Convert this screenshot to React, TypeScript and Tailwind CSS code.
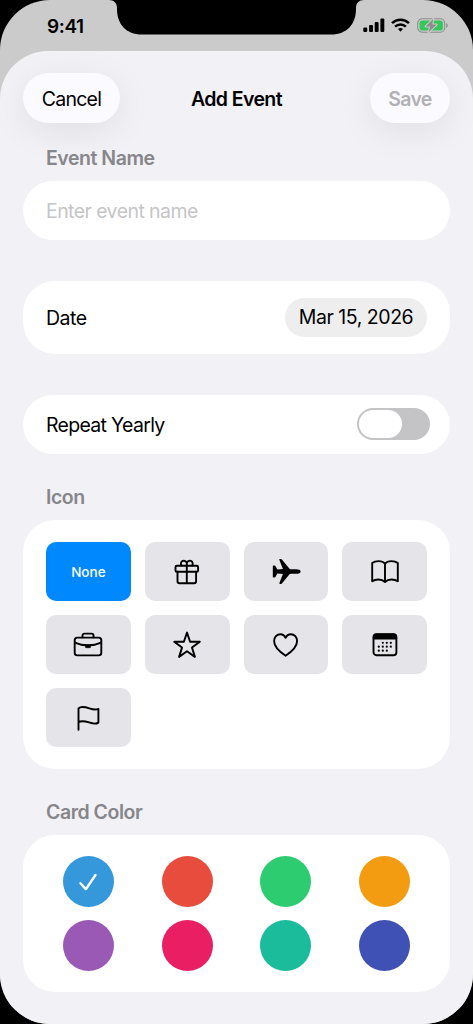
import { useState } from 'react';
import clsx from 'clsx';

const ICONS = ['none', 'gift', 'airplane', 'book', 'briefcase', 'star', 'heart', 'calendar', 'flag'];

const COLORS = [
  '#3498db',
  '#e74c3c',
  '#2ecc71',
  '#f39c12',
  '#9b59b6',
  '#e91e63',
  '#1abc9c',
  '#3f51b5',
];

const EventIcon = ({ name }: { name: string }) => {
  const props = {
    width: 32,
    height: 32,
    viewBox: '0 0 32 32',
    fill: 'none',
    stroke: 'currentColor',
    strokeWidth: 1.9,
    strokeLinecap: 'round' as const,
    strokeLinejoin: 'round' as const,
  };

  switch (name) {
    case 'gift':
      return (
        <svg {...props}>
          <rect x="4.5" y="9.8" width="22.6" height="6" rx="1.4" />
          <path d="M6.5 15.8v9.4a2 2 0 0 0 2 2h14.6a2 2 0 0 0 2-2v-9.4M15.8 9.8v17.4" />
          <path d="M15.8 9.8V7a3 3 0 1 0-5.4 2.4M15.8 9.800V7a3 3 0 1 1 5.400 2.400" />
        </svg>
      );
    case 'airplane':
      return (
        <svg {...props} fill="currentColor" stroke="none">
          <path
            transform="translate(1.1 -0.7)"
            d="M29.600 16.200c0-1.400-2.200-2.300-4.400-2.300h-5.400c-.7 0-1.100-.2-1.600-.8L11 4.400c-.3-.4-.7-.6-1.200-.6h-1c-.5 0-.7.4-.5.9l3.500 8.900-5.500.6-2-3.500a.9.9 0 0 0-.8-.4H2.300c-.4 0-.6.3-.6.6v10.600c0 .4.2.6.6.6h1.200c.4 0 .6-.1.8-.4l2-3.500 5.500.6-3.500 8.900c-.2.5 0 .9.5.9h1c.5 0 .9-.2 1.200-.6l7.200-8.700c.5-.6.9-.8 1.600-.8h5.400c2.200 0 4.400-.9 4.400-2.300z"
          />
        </svg>
      );
    case 'book':
      return (
        <svg {...props}>
          <path d="M16 7.800C14.700 6 12.300 5.100 9.600 5.100S4.500 5.900 3.200 7v18.300c1.600-1.100 3.800-1.800 6.200-1.800 2.700 0 5 .9 6.600 2.500 1.600-1.600 3.900-2.500 6.600-2.500 2.400 0 4.600.7 6.200 1.800V7c-1.300-1.100-3.700-1.900-6.400-1.900S17.300 6 16 7.800zV26" />
        </svg>
      );
    case 'briefcase':
      return (
        <svg {...props}>
          <rect x="2.700" y="8.600" width="26.600" height="17.800" rx="2.600" />
          <path d="M10.500 8.400V6.500a1.900 1.900 0 0 1 1.900-1.900h7.200a1.900 1.900 0 0 1 1.900 1.900v1.900" />
          <path d="M2.900 13.600c4 1.900 8.500 2.700 13.100 2.700s9.100-.8 13.100-2.700" />
          <rect x="13.400" y="16" width="5.200" height="2.700" rx="0.800" fill="currentColor" strokeWidth="0.600" />
        </svg>
      );
    case 'star':
      return (
        <svg {...props}>
          <path d="M16 3.600l3.100 9.100 9.700.1-7.800 5.800 2.900 9.300-7.900-5.600-7.900 5.600 2.900-9.300-7.800-5.800 9.700-.1z" />
        </svg>
      );
    case 'heart':
      return (
        <svg {...props}>
          <path d="M15.600 26.700C9.500 22.700 4.100 17.800 4.100 12c0-3.900 2.700-6.800 6.200-6.800 2.400 0 4.200 1.300 5.300 3.600 1.100-2.300 2.900-3.600 5.300-3.600 3.500 0 6.200 2.900 6.200 6.800 0 5.800-5.400 10.700-11.500 14.700z" />
        </svg>
      );
    case 'calendar':
      return (
        <svg {...props}>
          <rect x="4.500" y="5.300" width="22.900" height="21" rx="3" />
          <path d="M4.500 9.800V8.300a3 3 0 0 1 3-3h16.900a3 3 0 0 1 3 3v1.500z" fill="currentColor" strokeWidth="1.400" />
          <g fill="currentColor" stroke="none">
            {[
              [13.8, 13.8], [17.8, 13.8], [21.8, 13.8],
              [9.8, 17.7], [13.8, 17.7], [17.8, 17.7], [21.8, 17.7],
              [9.8, 21.7], [13.8, 21.7], [17.8, 21.7],
            ].map(([x, y]) => (
              <circle key={`${x}-${y}`} cx={x} cy={y} r="1.100" />
            ))}
          </g>
        </svg>
      );
    case 'flag':
      return (
        <svg {...props}>
          <path d="M6.500 27.800V6.300c.8-.8 2.100-1.300 4.300-1.300 5.200 0 7.600 2.500 12.400 2.500 1.200 0 2.200-.2 3.200-.6v13.700c-1 .7-2.200 1-3.600 1-4.400 0-7.300-2.400-12-2.400-2 0-3.300.3-4.300.9" />
        </svg>
      );
    default:
      return null;
  }
};

const StatusBar = () => (
  <div className="relative flex h-[51px] items-start justify-between pl-[47px] pr-[25px] pt-[14px]">
    <svg className="absolute left-[109px] top-0" width="255" height="35" viewBox="0 0 255 35">
      <path d="M0 0h255c-5 0-8 3-8 8v1c0 15-9 25.500-25 25.500H33C17 34.500 8 24 8 9V8C8 3 5 0 0 0z" />
    </svg>
    <span className="pt-[1px] text-[19px] font-semibold leading-6 tracking-[-0.4px]">9:41</span>
    <div className="flex items-center gap-[7px] pt-[4px]">
      <svg className="relative -left-[-2px]" width="22" height="15" viewBox="0 0 22 15">
        <rect x="0.300" y="9.400" width="3.900" height="4.600" rx="1.100" />
        <rect x="6.100" y="7" width="3.900" height="7" rx="1.100" />
        <rect x="11.700" y="3.900" width="3.900" height="10.100" rx="1.100" />
        <rect x="17.400" y="0.500" width="3.900" height="13.500" rx="1.100" />
      </svg>
      <svg className="ml-[1px]" width="19" height="15" viewBox="0 0 19 15" fill="none" stroke="#000" strokeWidth="2.500">
        <path d="M1 5.200a12.200 12.200 0 0 1 17 0" />
        <path d="M4.100 8.600a7.800 7.800 0 0 1 10.800 0" />
        <path d="M9.500 13.700l-2.500-2.600a3.700 3.700 0 0 1 5 0z" fill="#000" stroke="none" />
      </svg>
      <svg width="31" height="15" viewBox="0 0 31 15">
        <rect x="0.700" y="0.700" width="27" height="13.600" rx="4.500" fill="none" stroke="#8d8d8d" strokeWidth="1.100" />
        <rect x="2.500" y="2.400" width="23.400" height="10.200" rx="2.800" fill="#34c759" />
        <path d="M29.200 5.200c1 .3 1.500 1.200 1.500 2.300s-.5 2-1.500 2.300z" fill="#8d8d8d" />
        <path
          d="M16.400.8L8.600 8.400h4.600l-1.600 5.900 8.200-7.700h-4.600z"
          fill="#8d8d8d"
          stroke="#cbcbcb"
          strokeWidth="2"
          strokeLinejoin="round"
          paintOrder="stroke"
        />
      </svg>
    </div>
  </div>
);

const SectionTitle = ({ children }: { children: React.ReactNode }) => (
  <h2 className="mb-[9px] pl-[23px] text-[19.5px] font-semibold leading-7 tracking-[-0.47px] text-[#86868b]">
    {children}
  </h2>
);

const App = () => {
  const [name, setName] = useState('');
  const [repeat, setRepeat] = useState(false);
  const [icon, setIcon] = useState('none');
  const [color, setColor] = useState(COLORS[0]);

  return (
    <div className="h-[1024px] w-[473px] overflow-hidden bg-black font-['Inter','Liberation_Sans',sans-serif] text-black">
      <div className="h-full overflow-hidden rounded-[50px] bg-[#cbcbcb]">
        <StatusBar />
        <main className="h-[973px] overflow-hidden rounded-t-[48px] bg-[#f2f1f6] px-[23px] pt-[22px]">
          <header className="flex h-[50px] items-center justify-between">
            <button className="h-[50px] w-[97px] rounded-full bg-[#fbfaff] pt-[3px] text-[19.5px] tracking-[-0.75px] shadow-[0_8px_36px_rgba(0,0,0,0.08)]">
              Cancel
            </button>
            <h1 className="mr-[17px] pt-[3px] text-[19.5px] font-semibold tracking-[-0.6px]">Add Event</h1>
            <button
              disabled
              className="h-[50px] w-[80px] rounded-full bg-[#fbfaff] pt-[3px] text-[19.5px] font-semibold tracking-[-0.7px] text-[#b1b1b4] shadow-[0_8px_36px_rgba(0,0,0,0.08)]"
            >
              Save
            </button>
          </header>

          <section className="mt-[21px]">
            <SectionTitle>Event Name</SectionTitle>
            <div className="flex h-[59px] items-center rounded-full bg-white px-[23px] pt-[2px]">
              <input
                value={name}
                onChange={(e) => setName(e.target.value)}
                placeholder="Enter event name"
                className="w-full bg-transparent text-[19.5px] tracking-[-0.57px] outline-none placeholder:text-[#c5c5c7]"
              />
            </div>
          </section>

          <section className="mt-[41px] flex h-[73px] items-center justify-between rounded-[32px] bg-white px-[23px]">
            <span className="pt-[2px] text-[19.5px] tracking-[-0.5px]">Date</span>
            <button className="h-[39px] w-[142px] rounded-full bg-[#eeeeee] pt-[1px] text-[19.5px] tracking-[-0.45px]">
              Mar 15, 2026
            </button>
          </section>

          <section className="mt-[41px] flex h-[59px] items-center justify-between rounded-full bg-white pl-[23px] pr-[20px]">
            <span className="pt-[2px] text-[19.5px] tracking-[-0.7px]">Repeat Yearly</span>
            <button
              role="switch"
              aria-checked={repeat}
              onClick={() => setRepeat(!repeat)}
              className={clsx(
                'mb-[1px] flex h-[32px] w-[73px] items-center rounded-full px-[2px]',
                repeat ? 'justify-end bg-[#34c759]' : 'justify-start bg-[#c4c4c6]'
              )}
            >
              <span className="h-[28px] w-[43px] rounded-full bg-white" />
            </button>
          </section>

          <section className="mt-[29px]">
            <SectionTitle>Icon</SectionTitle>
            <div className="grid h-[249px] grid-cols-4 content-start gap-[14px] rounded-[32px] bg-white px-[23px] pt-[22px]">
              {ICONS.map((item) => (
                <button
                  key={item}
                  onClick={() => setIcon(item)}
                  className={clsx(
                    'flex h-[59px] items-center justify-center rounded-[10px]',
                    icon === item ? 'bg-[#0088ff] text-white' : 'bg-[#e5e4e9]'
                  )}
                >
                  {item === 'none' ? (
                    <span className="pt-[1px] text-[13.5px] font-medium">None</span>
                  ) : (
                    <EventIcon name={item} />
                  )}
                </button>
              ))}
            </div>
          </section>

          <section className="mt-[29px]">
            <SectionTitle>Card Color</SectionTitle>
            <div className="grid h-[157px] grid-cols-4 content-start justify-items-center gap-x-[14px] gap-y-[13px] rounded-[32px] bg-white px-[23px] pt-[21px]">
              {COLORS.map((item) => (
                <button
                  key={item}
                  onClick={() => setColor(item)}
                  className="flex size-[51px] items-center justify-center rounded-full"
                  style={{ backgroundColor: item }}
                >
                  {color === item && (
                    <svg width="20" height="20" viewBox="0 0 20 20" fill="none" stroke="#fff" strokeWidth="2.400" strokeLinecap="round" strokeLinejoin="round">
                      <path d="M2.500 11.200l5.300 6L17.500 3" />
                    </svg>
                  )}
                </button>
              ))}
            </div>
          </section>
        </main>
      </div>
    </div>
  );
};

export default App;
